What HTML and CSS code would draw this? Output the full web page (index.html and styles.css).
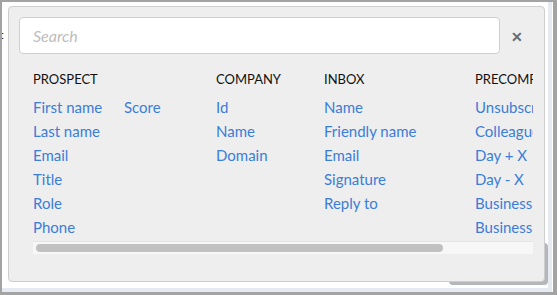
FILE: index.html
```html
<!DOCTYPE html>
<html lang="en">
<head>
  <meta charset="UTF-8">
  <title>Variables</title>
  <link rel="stylesheet" href="styles.css">
</head>
<body>

  <div class="frame">
    <div class="stage">
      <!-- text of the page underneath, mostly hidden -->
      <span class="behind">ac</span>
      <div class="ghost"></div>

      <div class="panel">
        <div class="search-row">
          <input class="search" type="text" placeholder="Search">
          <span class="close">&#x2715;</span>
        </div>

        <div class="fields">
          <div class="groups">
            <div class="group prospect">
              <h3>Prospect</h3>
              <div class="cols">
                <ul>
                  <li>First name</li>
                  <li>Last name</li>
                  <li>Email</li>
                  <li>Title</li>
                  <li>Role</li>
                  <li>Phone</li>
                </ul>
                <ul>
                  <li>Score</li>
                </ul>
              </div>
            </div>

            <div class="group company">
              <h3>Company</h3>
              <ul>
                <li>Id</li>
                <li>Name</li>
                <li>Domain</li>
              </ul>
            </div>

            <div class="group inbox">
              <h3>Inbox</h3>
              <ul>
                <li>Name</li>
                <li>Friendly name</li>
                <li>Email</li>
                <li>Signature</li>
                <li>Reply to</li>
              </ul>
            </div>

            <div class="group precomp">
              <h3>Precomputed</h3>
              <ul>
                <li>Unsubscribe link</li>
                <li>Colleagues</li>
                <li>Day + X</li>
                <li>Day - X</li>
                <li>Business day + X</li>
                <li>Business day - X</li>
              </ul>
            </div>
          </div>
        </div>

        <!-- horizontal scrollbar of the fields list -->
        <div class="scrollbar">
          <div class="thumb" style="width: 407px"></div>
        </div>
      </div>
    </div>
  </div>

</body>
</html>
```

FILE: styles.css
```css
body {
  margin: 0;
  font-family: Lato, "Open Sans", sans-serif;
  background: #fff;
}

.frame {
  width: 557px;
  height: 295px;
  box-sizing: border-box;
  border: 2px solid #a3a3a3;
  border-right-width: 4px;
  border-bottom-width: 3px;
  overflow: hidden;
}

.stage {
  position: relative;
  height: 100%;
  box-sizing: border-box;
  padding: 4px 0 0 6px;
  border-right: 4px solid #e6ebf1;
  border-bottom: 4px solid #e6ebf1;
  margin-right: 1px;
}

.behind {
  position: absolute;
  left: -9px;
  top: 26px;
  font-size: 11px;
  color: #000;
}

.ghost {
  position: absolute;
  left: 447px;
  top: 241px;
  width: 99px;
  height: 42px;
  background: #b4b6b9;
  border-radius: 4px;
}

.panel {
  position: relative;
  width: 537px;
  height: 276px;
  box-sizing: border-box;
  background: #eeeeee;
  border: 1px solid #cdcdcd;
  border-radius: 4px;
  padding: 10px 10px 0 10px;
}

.search-row {
  display: flex;
  align-items: center;
}

.search {
  flex: 1;
  height: 37px;
  box-sizing: border-box;
  border: 1px solid #cfcfcf;
  border-radius: 4px;
  background: #fff;
  padding: 0 13px;
  font-family: inherit;
  font-size: 16px;
  font-style: italic;
  outline: none;
}

.search::placeholder {
  color: #bdbdbd;
}

.close {
  width: 34px;
  text-align: center;
  font-size: 14px;
  font-weight: bold;
  color: #6a6a6a;
  padding-top: 2px;
}

.fields {
  margin: 15px 1px 0 14px;
  overflow: hidden;
}

.groups {
  display: flex;
  width: 614px;
}

.group h3 {
  margin: 0;
  font-size: 13px;
  font-weight: normal;
  text-transform: uppercase;
  color: #111;
  line-height: 20px;
  height: 26px;
}

.group ul {
  list-style: none;
  margin: 0;
  padding: 0;
}

.group li {
  font-size: 15px;
  line-height: 24px;
  color: #3b7dd8;
  white-space: nowrap;
  cursor: pointer;
}

.cols {
  display: flex;
}

.cols ul {
  width: 91px;
}

.prospect { width: 183px; }
.company { width: 108px; }
.inbox { width: 151px; }
.precomp { width: 172px; }

.scrollbar {
  margin: 2px 1px 0 14px;
  height: 13px;
  box-sizing: border-box;
  background: #f7f7f7;
  border-top: 1px solid #e4e4e4;
  padding: 2px 3px 0;
}

.thumb {
  height: 8px;
  background: #c1c1c1;
  border-radius: 4px;
}
```
